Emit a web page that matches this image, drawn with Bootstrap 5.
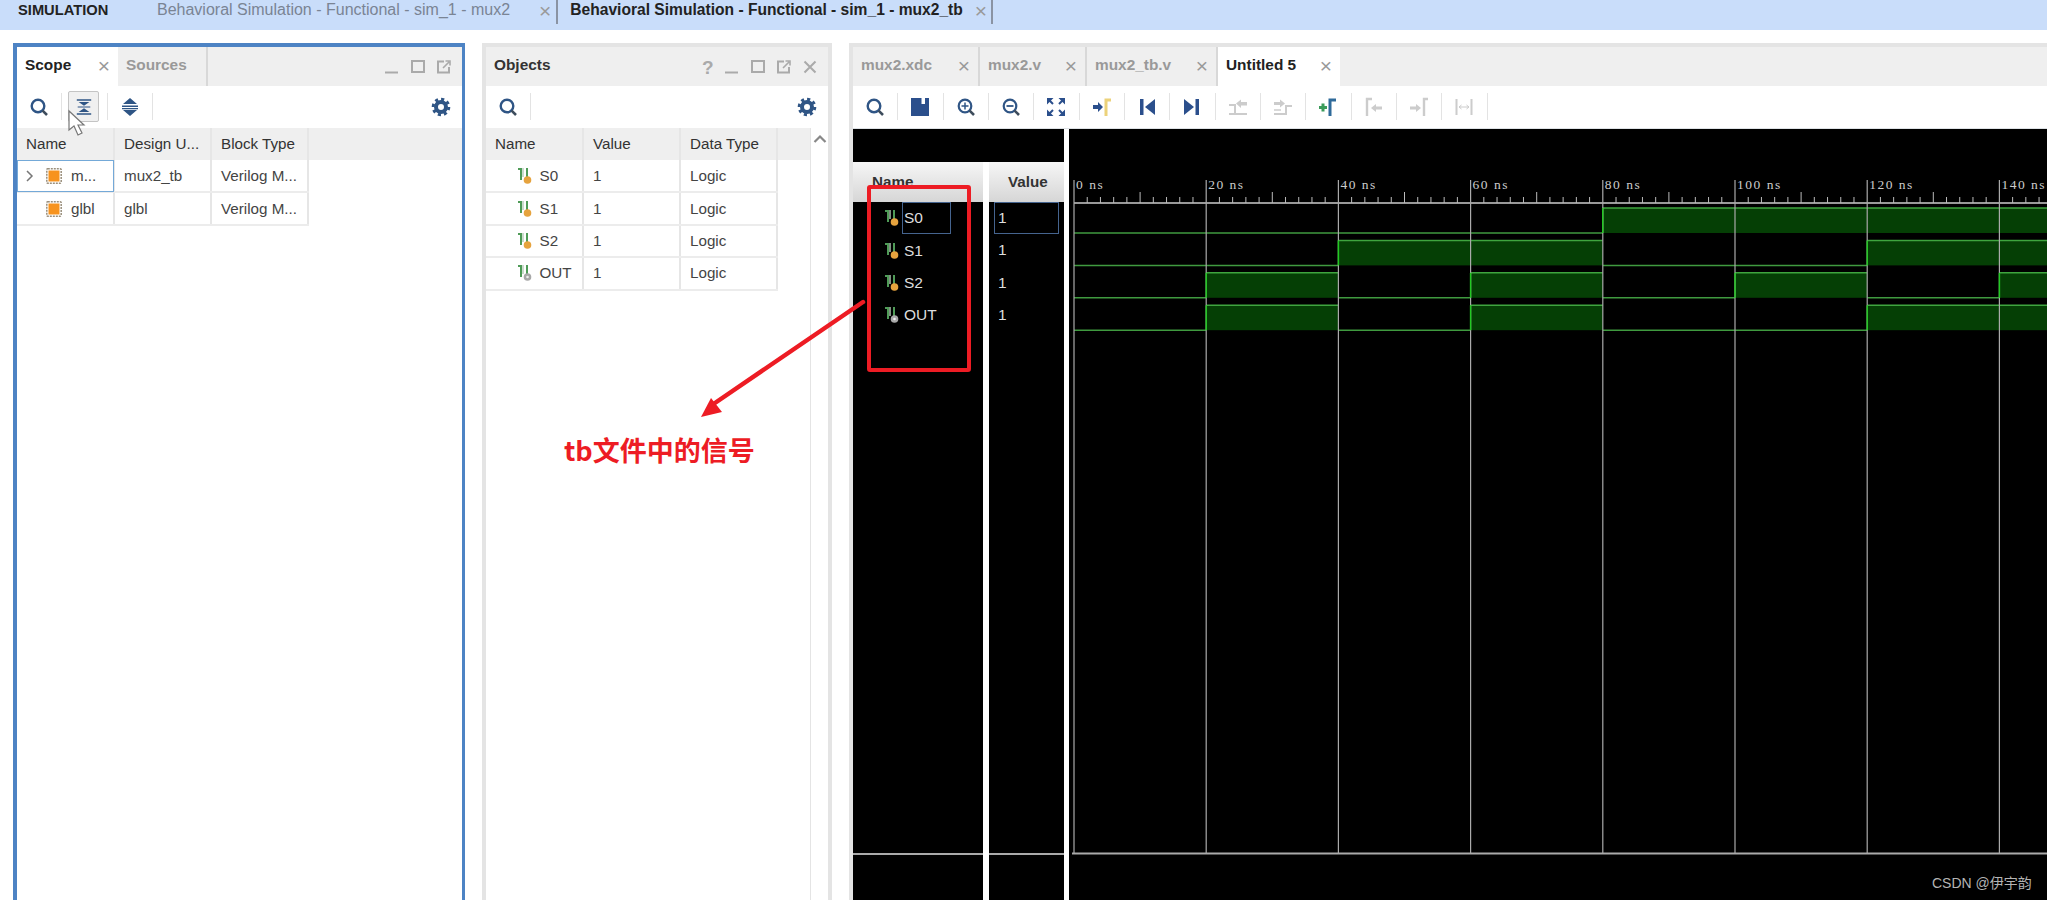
<!DOCTYPE html>
<html lang="en">
<head>
    <meta charset="UTF-8">
    <meta name="viewport" content="width=device-width, initial-scale=1.0">
    <title>Vivado Simulation</title>
    <link href="https://cdn.jsdelivr.net/npm/bootstrap@5.3.0/dist/css/bootstrap.min.css" rel="stylesheet">
    <style>
        body {
            font-family: "Liberation Sans", Arial, sans-serif;
            font-size: 15px;
            color: #444;
            background: #fff;
        }
        .ide-page { width: 2047px; height: 900px; }
        /* top flow bar */
        .flow-bar { height: 30px; background: #c9ddfa; line-height: 20px; font-size: 16px; }
        .flow-title { width: 157px; padding-left: 18px; font-weight: 700; font-size: 14.7px; color: #222; }
        .flow-tab { color: #7a8494; border-right: 2px solid #8a93a3; height: 24px; padding-right: 5px; }
        .flow-tab.is-active { color: #222; font-weight: 700; font-size: 15.6px; padding-left: 12px; padding-right: 4px; }
        .flow-tab .x-mark { margin: 1px 0 0 29px; }
        .flow-tab.is-active .x-mark { margin-left: 12px; font-weight: 400; }
        /* panels */
        .ide-main { padding: 13px 0 0 13px; gap: 17px; }
        .pane { border: 4px solid #e4e4e4; border-bottom: 0; min-height: 0; }
        .pane-scope { width: 452px; border-color: #4d83c4; border-width: 4px 3px 0 4px; }
        .pane-objects { width: 350px; }
        .pane-wave { border-right: 0; }
        .tab-strip { height: 39px; background: #efefef; }
        .pane-tab {
            height: 39px;
            padding: 0 8px 0 8px;
            font-weight: 700;
            font-size: 15.4px;
            color: #999;
            line-height: 35px;
            border-right: 2px solid #d8d8d8;
        }
        .pane-tab.is-active { background: #fff; color: #222; border-right: 0; }
        .pane-tab.plain { border-right: 0; color: #333; }
        .tab-101 { width: 101px; }
        .tab-90 { width: 90px; }
        .tab-127 { width: 127px; }
        .tab-107 { width: 107px; }
        .tab-131 { width: 131px; }
        .tab-122 { width: 122px; }
        .x-mark { color: #999; font-weight: 400; font-size: 21px; line-height: 20px; margin-top: 9px; }
        .win-btns { gap: 12px; padding: 13px 11px 0 0; }
        .help-mark { color: #aaa; font-weight: 700; font-size: 19px; line-height: 16px; width: 14px; padding-left: 3px; }
        /* toolbars */
        .tool-bar { height: 42px; background: #fff; padding: 7px 0 8px; }
        .tool-btn {
            width: 45.33px;
            height: 27px;
            border-right: 1px solid #e3e3e3;
            position: relative;
        }
        .tool-btn.is-hover::before {
            content: "";
            position: absolute;
            left: 6px;
            top: -2px;
            width: 31px;
            height: 31px;
            background: #f0f0f0;
            border: 1px solid #c4c4c4;
            border-radius: 2px;
        }
        .tool-btn svg { position: relative; }
        .gear-slot { padding: 2px 11px 0 0; }
        /* tables */
        .grid-wrap { background: linear-gradient(#efefef 32px, #fff 32px); }
        .grid-table {
            --bs-table-bg: transparent;
            --bs-table-color: #444;
            --bs-table-border-color: #e6e6e6;
            width: 292px;
            table-layout: fixed;
            margin: 0;
            font-size: 15.2px;
            line-height: 20px;
        }
        .grid-table th, .grid-table td {
            height: 32.4px;
            padding: 0 0 0 9px;
            vertical-align: middle;
            white-space: nowrap;
            border-right: 2px solid #e6e6e6;
            border-bottom: 2px solid #ececec;
        }
        .grid-table th { font-weight: 400; height: 32px; border-bottom: 0; color: #333; }
        .grid-table td.is-picked { outline: 1.5px solid #74a9d8; outline-offset: -1.5px; }
        .tree-gap { width: 22px; }
        .tree-cell { padding-left: 7px !important; }
        .sig-cell { padding-left: 31px !important; }
        .sig-label { margin-left: 9px; }
        .sig-cell .sig-label { margin-left: 6.5px; }
        .obj-scroll { width: 18px; border-left: 1px solid #e4e4e4; padding-top: 6px; }
        .obj-table-area { width: 324px; }
        /* waveform viewer */
        .wave-left { width: 211px; background: #000; }
        .wave-strip { height: 33px; }
        .wave-cols { gap: 6px; background: #fff; }
        .wave-col { background: #000; }
        .wave-col-name { width: 130px; }
        .wave-head {
            height: 40px;
            background: linear-gradient(#f6f6f6, #d6d6d6);
            font-weight: 700;
            font-size: 15.2px;
            color: #333;
            padding-top: 9px;
        }
        .wave-head-name { padding-left: 19px; }
        .wave-head-value { padding-left: 19px; }
        .wave-list { border-bottom: 2px solid #aaa; }
        .wave-foot { height: 45px; }
        .wave-row { height: 32.4px; color: #ddd; font-size: 15.5px; }
        .wave-row-name { padding-left: 31px; }
        .wave-row-value { padding: 0 5px; }
        .wave-name-box, .wave-value-box { height: 32px; border: 1px solid transparent; line-height: 30px; }
        .wave-name-box { width: 49px; margin-left: 2px; padding-left: 1px; }
        .wave-value-box { padding-left: 3px; }
        .is-boxed { border-color: #45648f; }
        .wave-gap { width: 5px; background: #fff; }
        .wave-canvas { background: #000; width: 978px; display: block; }
        .ruler-text { font-family: "Liberation Serif", serif; font-size: 13.5px; letter-spacing: 1.5px; fill: #ccc; }
        /* annotation over the screenshot */
        .note-layer { position: absolute; left: 0; top: 0; pointer-events: none; }
        .note-text {
            position: absolute;
            left: 564px;
            top: 431px;
            font-family: "Noto Sans CJK SC", sans-serif;
            font-weight: 700;
            font-size: 27px;
            line-height: 38px;
            color: #ed1c24;
            white-space: nowrap;
        }
        .csdn-mark {
            position: absolute;
            left: 1932px;
            top: 873px;
            font-family: "Liberation Sans", "Noto Sans CJK SC", sans-serif;
            font-size: 14px;
            line-height: 20px;
            color: #b4b4b4;
            white-space: nowrap;
        }
    </style>
</head>
<body>
    <!-- shared icons -->
    <svg width="0" height="0" class="d-block position-absolute">
        <defs>
            <symbol id="i-search" viewBox="0 0 20 20">
                <circle cx="9" cy="9" r="6.3" fill="none" stroke="#2f5585" stroke-width="2.4"/>
                <path d="M13.6 13.6 18 18" stroke="#3d4c5c" stroke-width="2.6"/>
            </symbol>
            <symbol id="i-gear" viewBox="0 0 20 20">
                <circle cx="10" cy="10" r="5" fill="none" stroke="#2f5585" stroke-width="4"/>
                <circle cx="10" cy="10" r="7.8" fill="none" stroke="#2f5585" stroke-width="3" stroke-dasharray="3.1 3"/>
            </symbol>
            <symbol id="i-collapse" viewBox="0 0 20 20">
                <path d="M2 1.5h16v1.6H2zM3 9.5h14v1H3zM2 16.900h16v1.600H2z" fill="#2f5585"/>
                <path d="M4 4.500h12l-6 4zM4 15.500l6-4 6 4z" fill="#2f5585"/>
            </symbol>
            <symbol id="i-expand" viewBox="0 0 20 20">
                <path d="M10 1l7 6H3zM10 19l-7-6h14z" fill="#2f5585"/>
                <path d="M2 8.400h16V10H2zM2 11h16v1.200H2z" fill="#2f5585"/>
            </symbol>
            <symbol id="i-chip" viewBox="0 0 16 16">
                <rect x="0.800" y="0.800" width="14.400" height="14.400" rx="1" fill="none" stroke="#9a8f7c" stroke-width="1.500" stroke-dasharray="2 1"/>
                <rect x="2.500" y="2.500" width="11" height="11" fill="#f7931e"/>
            </symbol>
            <symbol id="i-sig" viewBox="0 0 16 18">
                <path d="M1 2h3v11M10 1v9" fill="none" stroke="#4f9b57" stroke-width="2"/>
                <path d="M6 1v9" stroke="#b7cdb9" stroke-width="1.400"/>
                <circle cx="10.500" cy="13" r="3.800" fill="#e6a33e"/>
            </symbol>
            <symbol id="i-sig-out" viewBox="0 0 16 18">
                <path d="M1 2h3v11M10 1v9" fill="none" stroke="#4f9b57" stroke-width="2"/>
                <path d="M6 1v9" stroke="#b7cdb9" stroke-width="1.400"/>
                <circle cx="10.500" cy="13" r="3.800" fill="#a8a8a8"/>
                <circle cx="10.500" cy="13" r="1.300" fill="#eee"/>
            </symbol>
            <symbol id="i-min" viewBox="0 0 14 14"><path d="M0 12.500h13" stroke="#aaa" stroke-width="2"/></symbol>
            <symbol id="i-max" viewBox="0 0 14 14"><rect x="1" y="1" width="12" height="11" fill="none" stroke="#aaa" stroke-width="2"/></symbol>
            <symbol id="i-float" viewBox="0 0 14 14">
                <path d="M7 1.500H1V12.500h11V7" fill="none" stroke="#aaa" stroke-width="2"/>
                <path d="M6 8l6-6M8.500 1H13v4.500" fill="none" stroke="#aaa" stroke-width="1.600"/>
            </symbol>
            <symbol id="i-close" viewBox="0 0 14 14"><path d="M1.500 1.500l11 11M12.500 1.500l-11 11" stroke="#aaa" stroke-width="2"/></symbol>
            <symbol id="i-chev-r" viewBox="0 0 12 14"><path d="M3 2l5 5-5 5" fill="none" stroke="#777" stroke-width="1.500"/></symbol>
            <symbol id="i-chev-u" viewBox="0 0 14 10"><path d="M1.500 8 7 2.500 12.500 8" fill="none" stroke="#888" stroke-width="2.200"/></symbol>
            <symbol id="i-save" viewBox="0 0 20 20">
                <path d="M1 1h18v18H1z" fill="#2b4f8c"/>
                <path d="M11.500 1H15v6h-3.500z" fill="#fff"/>
            </symbol>
            <symbol id="i-zoom-in" viewBox="0 0 20 20">
                <circle cx="9" cy="9" r="6.300" fill="none" stroke="#2f5585" stroke-width="2.200"/>
                <path d="M5.500 9h7M9 5.500v7" stroke="#2f5585" stroke-width="1.500"/>
                <path d="M13.600 13.600 18 18" stroke="#3d4c5c" stroke-width="2.600"/>
            </symbol>
            <symbol id="i-zoom-out" viewBox="0 0 20 20">
                <circle cx="9" cy="9" r="6.300" fill="none" stroke="#2f5585" stroke-width="2.200"/>
                <path d="M5.500 9h7" stroke="#2f5585" stroke-width="1.800"/>
                <path d="M13.600 13.600 18 18" stroke="#3d4c5c" stroke-width="2.600"/>
            </symbol>
            <symbol id="i-fit" viewBox="0 0 20 20">
                <path d="M1 1h6.500L1 7.500zM19 1v6.500L12.500 1zM1 19v-6.500L7.500 19zM19 19h-6.500l6.500-6.500z" fill="#2b4f8c"/>
                <path d="M3 3l4 4M17 3l-4 4M3 17l4-4M17 17l-4-4" stroke="#2b4f8c" stroke-width="2"/>
            </symbol>
            <symbol id="i-cursor-to" viewBox="0 0 20 20">
                <path d="M1 8h5V5l5 5-5 5v-3H1z" fill="#2b4f8c"/>
                <path d="M14 19V3h5" fill="none" stroke="#ecd27a" stroke-width="3"/>
            </symbol>
            <symbol id="i-first" viewBox="0 0 20 20">
                <path d="M3 2h3.500v16H3z" fill="#2b4f8c"/>
                <path d="M18 2v16L8 10z" fill="#2b4f8c"/>
            </symbol>
            <symbol id="i-last" viewBox="0 0 20 20">
                <path d="M13.500 2H17v16h-3.500z" fill="#2b4f8c"/>
                <path d="M2 2v16l10-8z" fill="#2b4f8c"/>
            </symbol>
            <symbol id="i-prev-edge" viewBox="0 0 20 20">
                <path d="M1 8h6v8" fill="none" stroke="#ccc" stroke-width="2"/>
                <path d="M1 17h18" stroke="#ccc" stroke-width="2"/>
                <path d="M8 6.500l5-4v2.500h6v3.500h-6v2.500z" fill="#ccc"/>
            </symbol>
            <symbol id="i-next-edge" viewBox="0 0 20 20">
                <path d="M1 5h6V2.500l5 4-5 4V8H1z" fill="#ccc"/>
                <path d="M19 9h-6v8H1" fill="none" stroke="#ccc" stroke-width="2"/>
                <path d="M1 13h7" stroke="#ccc" stroke-width="1.500"/>
            </symbol>
            <symbol id="i-add-marker" viewBox="0 0 20 20">
                <path d="M1 10.500h8M5 6.500v8" stroke="#3b9b5a" stroke-width="3"/>
                <path d="M12 19V3h6" fill="none" stroke="#2f6a9a" stroke-width="3"/>
            </symbol>
            <symbol id="i-prev-marker" viewBox="0 0 20 20">
                <path d="M3 19V2h5" fill="none" stroke="#ccc" stroke-width="2.400"/>
                <path d="M7 11l5-4v2.500h6v3h-6V15z" fill="#ccc"/>
            </symbol>
            <symbol id="i-next-marker" viewBox="0 0 20 20">
                <path d="M1 9.500h6V7l5 4-5 4v-2.500H1z" fill="#ccc"/>
                <path d="M15 19V2h4" fill="none" stroke="#ccc" stroke-width="2.400"/>
            </symbol>
            <symbol id="i-swap" viewBox="0 0 20 20">
                <path d="M2.500 2v16M17.500 2v16" stroke="#ccc" stroke-width="2"/>
                <path d="M5 10h10M5 10l2.500-2M5 10l2.500 2M15 10l-2.500-2M15 10l-2.500 2" fill="none" stroke="#ccc" stroke-width="1"/>
            </symbol>
        </defs>
    </svg>

    <div class="ide-page d-flex flex-column overflow-hidden position-relative">
        <!-- flow bar -->
        <div class="flow-bar d-flex align-items-start flex-shrink-0">
            <div class="flow-title">SIMULATION</div>
            <div class="flow-tab d-flex">
                <span>Behavioral Simulation - Functional - sim_1 - mux2</span>
                <span class="x-mark">×</span>
            </div>
            <div class="flow-tab is-active d-flex">
                <span>Behavioral Simulation - Functional - sim_1 - mux2_tb</span>
                <span class="x-mark">×</span>
            </div>
        </div>

        <div class="ide-main d-flex flex-grow-1 overflow-hidden">
            <!-- Scope -->
            <section class="pane pane-scope d-flex flex-column flex-shrink-0">
                <div class="tab-strip d-flex">
                    <div class="pane-tab tab-101 is-active d-flex justify-content-between"><span>Scope</span><span class="x-mark">×</span></div>
                    <div class="pane-tab tab-90"><span>Sources</span></div>
                    <div class="win-btns d-flex ms-auto">
                        <svg width="14" height="14"><use href="#i-min"/></svg>
                        <svg width="14" height="14"><use href="#i-max"/></svg>
                        <svg width="14" height="14"><use href="#i-float"/></svg>
                    </div>
                </div>
                <div class="tool-bar d-flex">
                    <div class="tool-btn d-flex align-items-center justify-content-center"><svg width="20" height="20"><use href="#i-search"/></svg></div>
                    <div class="tool-btn is-hover d-flex align-items-center justify-content-center"><svg width="18" height="18"><use href="#i-collapse"/></svg></div>
                    <div class="tool-btn d-flex align-items-center justify-content-center"><svg width="20" height="20"><use href="#i-expand"/></svg></div>
                    <div class="gear-slot ms-auto"><svg width="20" height="20"><use href="#i-gear"/></svg></div>
                </div>
                <div class="grid-wrap flex-grow-1">
                    <table class="table grid-table">
                        <thead><tr><th>Name</th><th>Design U...</th><th>Block Type</th></tr></thead>
                        <tbody>
                            <tr>
                                <td class="tree-cell is-picked"><div class="d-flex align-items-center"><span class="tree-gap d-flex"><svg width="12" height="14"><use href="#i-chev-r"/></svg></span><svg width="16" height="16"><use href="#i-chip"/></svg><span class="sig-label">m...</span></div></td>
                                <td>mux2_tb</td>
                                <td>Verilog M...</td>
                            </tr>
                            <tr>
                                <td class="tree-cell"><div class="d-flex align-items-center"><span class="tree-gap"></span><svg width="16" height="16"><use href="#i-chip"/></svg><span class="sig-label">glbl</span></div></td>
                                <td>glbl</td>
                                <td>Verilog M...</td>
                            </tr>
                        </tbody>
                    </table>
                </div>
            </section>

            <!-- Objects -->
            <section class="pane pane-objects d-flex flex-column flex-shrink-0">
                <div class="tab-strip d-flex">
                    <div class="pane-tab plain"><span>Objects</span></div>
                    <div class="win-btns d-flex ms-auto">
                        <span class="help-mark">?</span>
                        <svg width="14" height="14"><use href="#i-min"/></svg>
                        <svg width="14" height="14"><use href="#i-max"/></svg>
                        <svg width="14" height="14"><use href="#i-float"/></svg>
                        <svg width="14" height="14"><use href="#i-close"/></svg>
                    </div>
                </div>
                <div class="tool-bar d-flex">
                    <div class="tool-btn d-flex align-items-center justify-content-center"><svg width="20" height="20"><use href="#i-search"/></svg></div>
                    <div class="gear-slot ms-auto"><svg width="20" height="20"><use href="#i-gear"/></svg></div>
                </div>
                <div class="d-flex flex-grow-1">
                    <div class="obj-table-area grid-wrap">
                        <table class="table grid-table">
                            <thead><tr><th>Name</th><th>Value</th><th>Data Type</th></tr></thead>
                            <tbody>
                                <tr><td class="sig-cell"><div class="d-flex align-items-center"><svg width="16" height="18"><use href="#i-sig"/></svg><span class="sig-label">S0</span></div></td><td>1</td><td>Logic</td></tr>
                                <tr><td class="sig-cell"><div class="d-flex align-items-center"><svg width="16" height="18"><use href="#i-sig"/></svg><span class="sig-label">S1</span></div></td><td>1</td><td>Logic</td></tr>
                                <tr><td class="sig-cell"><div class="d-flex align-items-center"><svg width="16" height="18"><use href="#i-sig"/></svg><span class="sig-label">S2</span></div></td><td>1</td><td>Logic</td></tr>
                                <tr><td class="sig-cell"><div class="d-flex align-items-center"><svg width="16" height="18"><use href="#i-sig-out"/></svg><span class="sig-label">OUT</span></div></td><td>1</td><td>Logic</td></tr>
                            </tbody>
                        </table>
                    </div>
                    <div class="obj-scroll d-flex justify-content-center align-items-start"><svg width="14" height="10"><use href="#i-chev-u"/></svg></div>
                </div>
            </section>

            <!-- Waveform -->
            <section class="pane pane-wave d-flex flex-column flex-grow-1">
                <div class="tab-strip d-flex">
                    <div class="pane-tab tab-127 d-flex justify-content-between"><span>mux2.xdc</span><span class="x-mark">×</span></div>
                    <div class="pane-tab tab-107 d-flex justify-content-between"><span>mux2.v</span><span class="x-mark">×</span></div>
                    <div class="pane-tab tab-131 d-flex justify-content-between"><span>mux2_tb.v</span><span class="x-mark">×</span></div>
                    <div class="pane-tab tab-122 is-active d-flex justify-content-between"><span>Untitled 5</span><span class="x-mark">×</span></div>
                </div>
                <div class="tool-bar d-flex" id="waveTools"></div>
                <div class="d-flex flex-grow-1 border-top">
                    <div class="wave-left d-flex flex-column">
                        <div class="wave-strip"></div>
                        <div class="wave-cols d-flex flex-grow-1">
                            <div class="wave-col wave-col-name d-flex flex-column">
                                <div class="wave-head wave-head-name">Name</div>
                                <div class="wave-list flex-grow-1" id="waveNames"></div>
                                <div class="wave-foot"></div>
                            </div>
                            <div class="wave-col flex-grow-1 d-flex flex-column">
                                <div class="wave-head wave-head-value">Value</div>
                                <div class="wave-list flex-grow-1" id="waveValues"></div>
                                <div class="wave-foot"></div>
                            </div>
                        </div>
                    </div>
                    <div class="wave-gap"></div>
                    <svg class="wave-canvas" id="waveCanvas" height="771" viewBox="1069 129 978 771"></svg>
                </div>
            </section>
        </div>

        <!-- red note and cursor lie over the IDE -->
        <svg class="note-layer" width="2047" height="900">
            <rect x="869" y="187" width="100" height="183" rx="1" fill="none" stroke="#ed1c24" stroke-width="4"/>
            <path d="M863 302 712 405" stroke="#ed1c24" stroke-width="4.500" stroke-linecap="round"/>
            <path d="M701 417 711 398 722 412z" fill="#ed1c24"/>
            <path d="M69 111V130L74 126 78 135 82 133 78 125H84z" fill="#fff" stroke="#777" stroke-width="1.200"/>
        </svg>
        <div class="note-text">tb文件中的信号</div>
        <div class="csdn-mark">CSDN @伊宇韵</div>
    </div>

    <script src="https://cdn.jsdelivr.net/npm/bootstrap@5.3.0/dist/js/bootstrap.bundle.min.js"></script>
    <script>
        // Waveform toolbar
        const tools = ['i-search', 'i-save', 'i-zoom-in', 'i-zoom-out', 'i-fit', 'i-cursor-to', 'i-first', 'i-last',
            'i-prev-edge', 'i-next-edge', 'i-add-marker', 'i-prev-marker', 'i-next-marker', 'i-swap'];
        document.getElementById('waveTools').innerHTML = tools.map(id =>
            `<div class="tool-btn d-flex align-items-center justify-content-center"><svg width="20" height="20"><use href="#${id}"/></svg></div>`
        ).join('');

        // Signals: level per 20 ns slot, from 0 ns to past 140 ns
        const signals = [
            { name: 'S0', icon: 'i-sig', levels: [0, 0, 0, 0, 1, 1, 1, 1] },
            { name: 'S1', icon: 'i-sig', levels: [0, 0, 1, 1, 0, 0, 1, 1] },
            { name: 'S2', icon: 'i-sig', levels: [0, 1, 0, 1, 0, 1, 0, 1] },
            { name: 'OUT', icon: 'i-sig-out', levels: [0, 1, 0, 1, 0, 0, 1, 1] }
        ];

        document.getElementById('waveNames').innerHTML = signals.map((s, i) =>
            `<div class="wave-row wave-row-name d-flex align-items-center"><svg width="16" height="18"><use href="#${s.icon}"/></svg><span class="wave-name-box ${i === 0 ? 'is-boxed' : ''}">${s.name}</span></div>`
        ).join('');
        document.getElementById('waveValues').innerHTML = signals.map((s, i) =>
            `<div class="wave-row wave-row-value"><div class="wave-value-box ${i === 0 ? 'is-boxed' : ''}">1</div></div>`
        ).join('');

        // Draw ruler and traces, viewBox is in page pixels
        const pxPerNs = 6.61;
        const x0 = 1074;
        const xAt = ns => x0 + ns * pxPerNs;
        let svg = '';

        svg += `<path d="M${x0} 203H2047" stroke="#ccc" stroke-width="1.5"/>`;
        for (let ns = 2; ns < 150; ns += 2) {
            if (ns % 20 === 0) continue;
            const h = ns % 10 === 0 ? 11 : 6;
            svg += `<path d="M${xAt(ns)} 203v-${h}" stroke="#bbb"/>`;
        }
        for (let ns = 0; ns <= 140; ns += 20) {
            svg += `<text class="ruler-text" x="${xAt(ns) + 2}" y="189">${ns} ns</text>`;
        }

        // traces first, grid lines stay visible across them, edges on top
        let edges = '';
        signals.forEach((s, i) => {
            const top = 208 + i * 32.4;
            const low = top + 25;
            s.levels.forEach((lv, slot) => {
                const a = xAt(slot * 20);
                const b = slot === 7 ? 2047 : xAt((slot + 1) * 20);
                if (lv) {
                    svg += `<rect x="${a}" y="${top}" width="${b - a}" height="25" fill="#053f05"/>`;
                    svg += `<path d="M${a} ${top}H${b}" stroke="#3fa53f" stroke-width="1.5"/>`;
                } else {
                    svg += `<path d="M${a} ${low}H${b}" stroke="#3f9a3f" stroke-width="1.5"/>`;
                }
                if (slot > 0 && s.levels[slot - 1] === 0 && lv === 1) {
                    edges += `<path d="M${a} ${top}V${low}" stroke="#22c922" stroke-width="1.5"/>`;
                }
            });
        });
        for (let ns = 0; ns <= 140; ns += 20) {
            svg += `<path d="M${xAt(ns)} 180V853" stroke="#aaa" stroke-width="1.2"/>`;
        }
        svg += edges;
        svg += `<path d="M${x0 - 2} 853.5H2047" stroke="#aaa" stroke-width="2"/>`;

        document.getElementById('waveCanvas').innerHTML = svg;
    </script>
</body>
</html>
